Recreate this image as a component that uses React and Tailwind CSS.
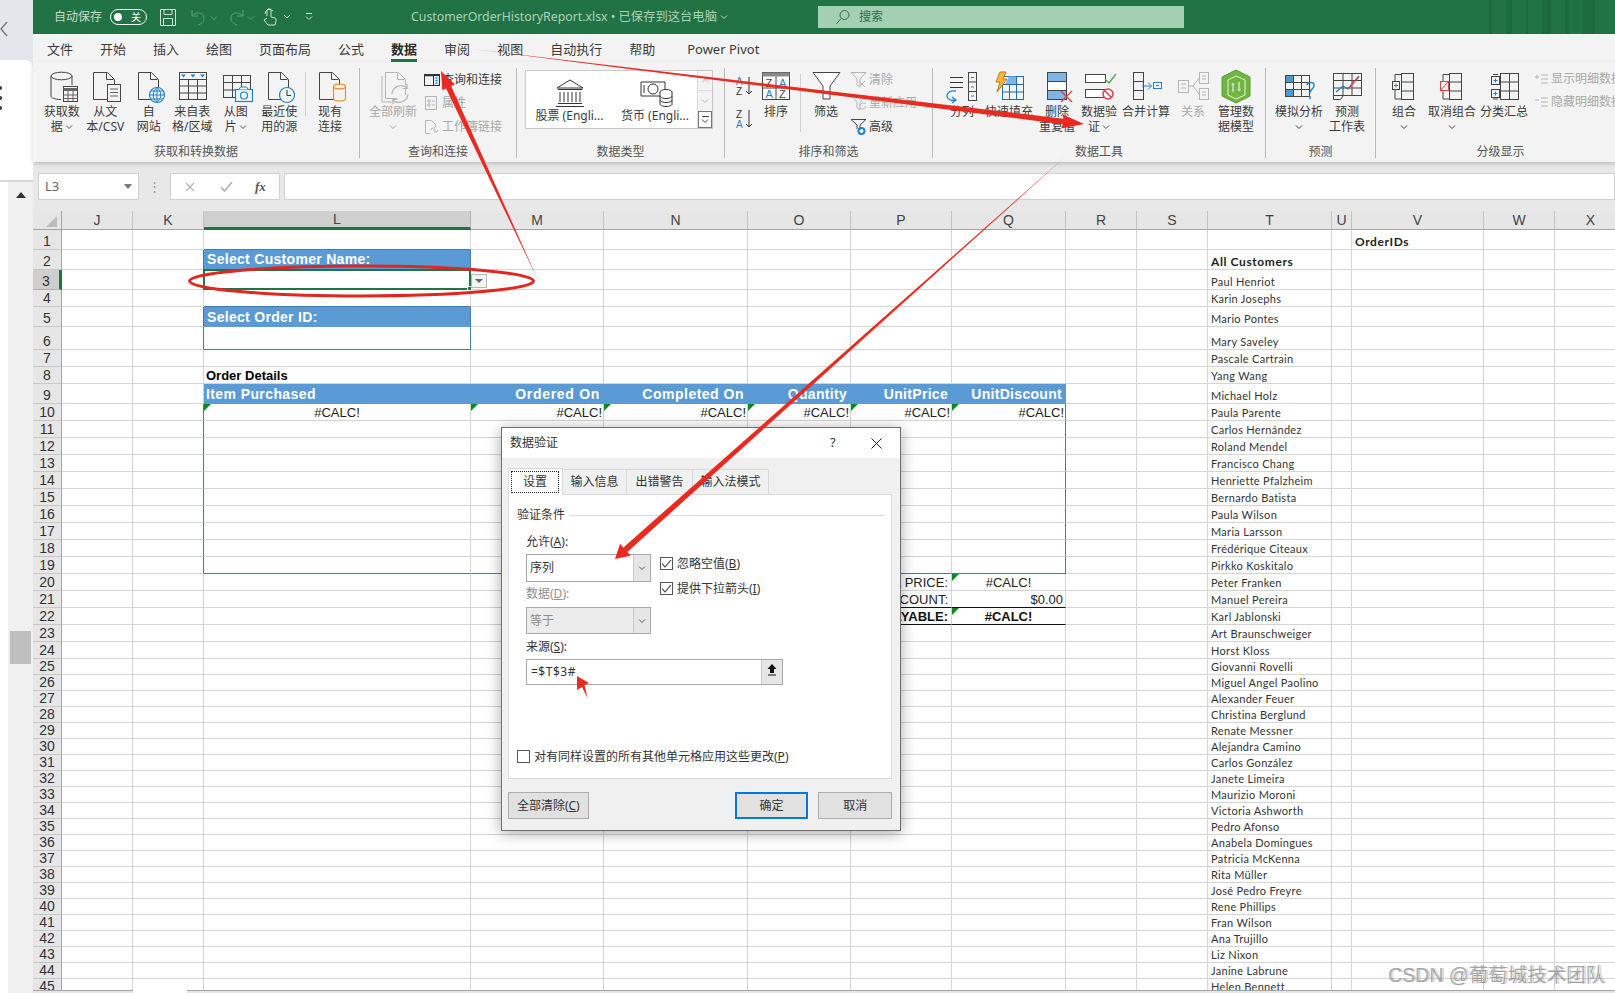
import { Fragment } from "react";

const UI_FONT = "font-['Noto_Sans','Noto_Sans_CJK_SC',sans-serif]";

const TABS = ["文件", "开始", "插入", "绘图", "页面布局", "公式", "数据", "审阅", "视图", "自动执行", "帮助", "Power Pivot"];

const COLS = ["J", "K", "L", "M", "N", "O", "P", "Q", "R", "S", "T", "U", "V", "W", "X"];

const CUSTOMERS = [
  "Paul Henriot", "Karin Josephs", "Mario Pontes", "Mary Saveley", "Pascale Cartrain", "Yang Wang", "Michael Holz",
  "Paula Parente", "Carlos Hernández", "Roland Mendel", "Francisco Chang", "Henriette Pfalzheim", "Bernardo Batista",
  "Paula Wilson", "Maria Larsson", "Frédérique Citeaux", "Pirkko Koskitalo", "Peter Franken", "Manuel Pereira",
  "Karl Jablonski", "Art Braunschweiger", "Horst Kloss", "Giovanni Rovelli", "Miguel Angel Paolino", "Alexander Feuer",
  "Christina Berglund", "Renate Messner", "Alejandra Camino", "Carlos González", "Janete Limeira", "Maurizio Moroni",
  "Victoria Ashworth", "Pedro Afonso", "Anabela Domingues", "Patricia McKenna", "Rita Müller", "José Pedro Freyre",
  "Rene Phillips", "Fran Wilson", "Ana Trujillo", "Liz Nixon", "Janine Labrune", "Helen Bennett",
];

const BLUE = "bg-[#5b9bd5] border-r-[#5b9bd5] border-b-[#5b9bd5] text-white font-bold text-[14px] pb-[1px]";
const CALC = "justify-end pr-[1px] text-[13px] text-[#222]";
const LIST_HEAD = "pl-[3px] font-['Lato',sans-serif] font-bold text-[12px] tracking-[0.6px] text-[#222]";

// cell styles, keyed by column + row
const CELLS = {
  L1: { cls: "border-b-[#3f7cb3]" },
  K2: { cls: "border-r-[#3f7cb3]" },
  L2: { text: "Select Customer Name:", cls: "bg-[#5b9bd5] border-r-[#3f7cb3] border-b-[#5b9bd5] text-white font-bold text-[14px] tracking-[0.3px] pl-[3px] pb-[2px]" },
  L4: { cls: "border-b-[#3f7cb3]" },
  K5: { cls: "border-r-[#3f7cb3]" },
  L5: { text: "Select Order ID:", cls: "bg-[#5b9bd5] border-r-[#3f7cb3] border-b-[#5b9bd5] text-white font-bold text-[14px] tracking-[0.3px] pl-[3px] pb-[1px]" },
  K6: { cls: "border-r-[#3f7cb3]" },
  L6: { cls: "border-r-[#3f7cb3] border-b-[#3f7cb3]" },
  L8: { text: "Order Details", cls: "pl-[2px] font-bold text-[13px] text-black" },
  L9: { text: "Item Purchased", cls: `${BLUE} pl-[2px] tracking-[0.4px]` },
  M9: { text: "Ordered On", cls: `${BLUE} justify-end pr-[3px] tracking-[0.7px]` },
  N9: { text: "Completed On", cls: `${BLUE} justify-end pr-[3px] tracking-[0.5px]` },
  O9: { text: "Quantity", cls: `${BLUE} justify-end pr-[3px] tracking-[0.3px]` },
  P9: { text: "UnitPrice", cls: `${BLUE} justify-end pr-[3px] tracking-[0.3px]` },
  Q9: { text: "UnitDiscount", cls: `${BLUE} justify-end pr-[3px] tracking-[0.3px]` },
  L10: { text: "#CALC!", tri: true, cls: "justify-center text-[13px] text-[#222]" },
  M10: { text: "#CALC!", tri: true, cls: CALC },
  N10: { text: "#CALC!", tri: true, cls: CALC },
  O10: { text: "#CALC!", tri: true, cls: CALC },
  P10: { text: "#CALC!", tri: true, cls: CALC },
  Q10: { text: "#CALC!", tri: true, cls: `${CALC} border-r-[#3f7cb3]` },
  L19: { cls: "border-b-[#3f7cb3]" },
  M19: { cls: "border-b-[#3f7cb3]" },
  N19: { cls: "border-b-[#3f7cb3]" },
  O19: { cls: "border-b-[#3f7cb3]" },
  P19: { cls: "border-b-[#3f7cb3]" },
  Q19: { cls: "border-b-[#3f7cb3] border-r-[#3f7cb3]" },
  P20: { text: "TOTAL PRICE:", cls: "justify-end pr-[3px] text-[13px] text-[#222]" },
  Q20: { text: "#CALC!", tri: true, cls: "justify-center text-[13px] text-[#222]" },
  P21: { text: "DISCOUNT:", cls: "justify-end pr-[3px] text-[13px] text-[#222] border-b-[#111]" },
  Q21: { text: "$0.00", cls: "justify-end pr-[2px] text-[13px] text-[#222] border-b-[#111]" },
  P22: { text: "TOTAL PAYABLE:", cls: "justify-end pr-[3px] font-bold text-[13px] text-[#111] border-b-[#111]" },
  Q22: { text: "#CALC!", tri: true, cls: "justify-center font-bold text-[13px] text-[#111] border-b-[#111]" },
  V1: { text: "OrderIDs", cls: LIST_HEAD },
  T2: { text: "All Customers", cls: LIST_HEAD },
};
for (let r = 10; r < 19; r++) {
  CELLS["K" + r] = { cls: "border-r-[#3f7cb3]" };
  if (r > 10) CELLS["Q" + r] = { cls: "border-r-[#3f7cb3]" };
}
CELLS.K19 = { cls: "border-r-[#3f7cb3]" };
CUSTOMERS.forEach((name, i) => {
  CELLS["T" + (i + 3)] = { text: name, cls: "pl-[3px] font-['Lato',sans-serif] text-[11px] tracking-[0.3px] text-[#333]" };
});

function Chevron({ className = "" }) {
  return (
    <svg width="8" height="6" viewBox="0 0 8 6" className={className}>
      <path d="M1 1.5l3 3 3-3" fill="none" stroke="currentColor" strokeWidth="1" />
    </svg>
  );
}

function Ic({ children, w = 36, h = 36 }) {
  return (
    <svg width={w} height={h} viewBox={`0 0 ${w} ${h}`} fill="none" stroke="#444" strokeWidth="1" className="shrink-0">
      {children}
    </svg>
  );
}

const DOC = (x, y, w, h) => `M${x + 0.5} ${y + 0.5}h${w - 7}l7 7v${h - 7}h${-w}z M${x + w - 7.5} ${y + 0.5}v7h7`;

const ICONS = {
  getData: (
    <Ic>
      <path d="M7 8v20c0 2 4 3.500 10 3.500 M28 8v9" />
      <ellipse cx="17.500" cy="8" rx="10.500" ry="3.800" fill="#f3f3f3" />
      <rect x="19.500" y="18.500" width="14" height="15" fill="#f3f3f3" />
      <path d="M19.500 21.500h14" stroke="#666" strokeWidth="3" />
      <path d="M19.500 27h14M19.500 30.500h14M24 23v10M29 23v10" stroke="#666" />
    </Ic>
  ),
  fromText: (
    <Ic>
      <path d={DOC(6, 4, 21, 27)} />
      <rect x="20.500" y="16.500" width="13" height="17" fill="#f3f3f3" />
      <path d="M23 21h8M23 24.500h8M23 28h8" stroke="#666" />
    </Ic>
  ),
  web: (
    <Ic>
      <path d={DOC(7, 4, 20, 27)} />
      <circle cx="26" cy="27" r="7.500" fill="#f3f3f3" stroke="#1e84c9" strokeWidth="1.200" />
      <path d="M18.500 27h15M26 19.500v15M20 23h12M20 31h12M26 19.500c-5 4-5 11 0 15M26 19.500c5 4 5 11 0 15" stroke="#1e84c9" />
    </Ic>
  ),
  fromTable: (
    <Ic>
      <rect x="5.500" y="4.500" width="27" height="27" />
      <path d="M5.500 11.500h27M5.500 18h27M5.500 25h27M14.500 11.500v20M23.500 11.500v20" />
      <path d="M7 6.500h5l-2.500 3zM16.500 6.500h5l-2.500 3zM26 6.500h5l-2.500 3z" fill="#1e84c9" stroke="none" />
    </Ic>
  ),
  fromPic: (
    <Ic>
      <rect x="5.500" y="7.500" width="27" height="22" />
      <path d="M5.500 14.500h27M5.500 22h27M14.500 7.500v22M23.500 7.500v22" />
      <rect x="17.500" y="21.500" width="17" height="12" fill="#f3f3f3" stroke="#1e84c9" strokeWidth="1.200" />
      <path d="M21 21.500l1.500-2.500h6l1.500 2.500" fill="#f3f3f3" stroke="#1e84c9" />
      <circle cx="26" cy="27.500" r="3.500" stroke="#1e84c9" strokeWidth="1.200" />
    </Ic>
  ),
  recent: (
    <Ic>
      <path d={DOC(7, 4, 20, 27)} />
      <circle cx="26" cy="27" r="7.500" fill="#f3f3f3" stroke="#1e84c9" strokeWidth="1.200" />
      <path d="M26 22v5.500h4" stroke="#333" />
    </Ic>
  ),
  existing: (
    <Ic>
      <path d={DOC(7, 4, 20, 27)} />
      <path d="M21.500 18.500v12c0 1.500 2.500 2.500 6 2.500s6-1 6-2.500v-12" fill="#f3f3f3" stroke="#e8912d" strokeWidth="1.200" />
      <ellipse cx="27.500" cy="18.500" rx="6" ry="2.300" fill="#f3f3f3" stroke="#e8912d" strokeWidth="1.200" />
    </Ic>
  ),
  refresh: (
    <Ic>
      <g stroke="#b5b5b5">
        <path d={DOC(10, 4, 20, 26)} />
        <path d="M7 8v26h16" />
        <path d="M17 26a9 9 0 0 1 15-6M33 26a9 9 0 0 1-15 6M32 16v4.500h-4.500M18 36v-4.500h4.500" fill="#f3f3f3" strokeWidth="1.200" />
      </g>
    </Ic>
  ),
  bank: (
    <Ic h={30} w={36}>
      <path d="M18 2L5 10h26z M6 11.500h24M8 14v10M12 14v10M16 14v10M20 14v10M24 14v10M28 14v10M6 25.500h24M4 28.500h28" stroke="#333" />
    </Ic>
  ),
  currency: (
    <Ic h={30} w={40}>
      <path d="M28 18H6V4h24v8" stroke="#333" />
      <circle cx="18" cy="11" r="5" stroke="#333" />
      <path d="M9 7v8" stroke="#333" />
      <g stroke="#333" fill="#fff">
        <ellipse cx="31" cy="14" rx="6" ry="2.500" />
        <path d="M25 14v12c0 1.500 3 2.500 6 2.500s6-1 6-2.500V14M25 18c0 1.500 3 2.500 6 2.500s6-1 6-2.500M25 22c0 1.500 3 2.500 6 2.500s6-1 6-2.500" />
      </g>
    </Ic>
  ),
  sortBig: (
    <Ic w={36} h={36}>
      <rect x="4.500" y="4.500" width="27" height="27" fill="#fff" />
      <rect x="4.500" y="4.500" width="27" height="4" fill="#8a8a8a" stroke="none" />
      <path d="M18 8.500v23M4.500 20h27" />
      <g stroke="none" fontFamily="Liberation Sans" fontSize="11">
        <text x="7.500" y="18.500" fill="#444">Z</text>
        <text x="21" y="18.500" fill="#1e84c9">A</text>
        <text x="7.500" y="30" fill="#1e84c9">A</text>
        <text x="21" y="30" fill="#444">Z</text>
      </g>
    </Ic>
  ),
  funnel: (
    <Ic>
      <path d="M5 4.500h27L22 18v13h-7V18z" fill="#fff" />
    </Ic>
  ),
  split: (
    <Ic>
      <path d="M6 9.500h13M6 14.500h13M6 19.500h13" stroke="#333" />
      <path d="M12 23c-6-1-9 2-9 5s3 5 9 4" stroke="#1e84c9" strokeWidth="1.300" />
      <path d="M8 29l4 3-4 3" stroke="#1e84c9" strokeWidth="1.300" />
      <rect x="24.500" y="4.500" width="8" height="28" />
      <path d="M24.500 14h8M24.500 23.500h8" />
      <path d="M27 9.500h3M27 19h3M27 28h3" stroke="#1e84c9" />
    </Ic>
  ),
  flash: (
    <Ic>
      <rect x="11.500" y="8.500" width="21" height="23" stroke="#1e6fa8" />
      <path d="M18 8.500h7v8h-11z" fill="#7cb5e6" stroke="none" />
      <path d="M11.500 16.500h21M11.500 24h21M18.500 16.500v15M25.500 8.500v23" stroke="#1e6fa8" />
      <path d="M9 4h6l-3 7h4L6 24l3-10H5z" fill="#f5b83d" stroke="#c9781a" />
    </Ic>
  ),
  dup: (
    <Ic>
      <rect x="8.500" y="4.500" width="19" height="27" fill="#fff" />
      <rect x="8.500" y="4.500" width="19" height="9" fill="#7cb5e6" />
      <rect x="8.500" y="22.500" width="19" height="9" fill="#7cb5e6" />
      <path d="M22 23l11 11M33 23L22 34" stroke="#e0413a" strokeWidth="1.300" />
    </Ic>
  ),
  validate: (
    <Ic>
      <rect x="4.500" y="6.500" width="20" height="8" fill="#fff" />
      <rect x="4.500" y="21.500" width="20" height="8" fill="#fff" />
      <path d="M24 11l4 4 7-9" stroke="#4ca64c" strokeWidth="1.300" />
      <circle cx="27" cy="26" r="5" fill="#f3f3f3" stroke="#d9434e" strokeWidth="1.500" />
      <path d="M23.500 22.500l7 7" stroke="#d9434e" strokeWidth="1.500" />
    </Ic>
  ),
  consolidate: (
    <Ic>
      <rect x="5.500" y="4.500" width="10" height="9" />
      <rect x="5.500" y="13.500" width="10" height="9" />
      <rect x="5.500" y="22.500" width="10" height="9" />
      <path d="M14 18h9M20 14.500l3.500 3.500-3.500 3.500" stroke="#1e84c9" />
      <rect x="25.500" y="14.500" width="8" height="6" stroke="#1e84c9" />
      <path d="M28 17.500h3" stroke="#1e84c9" />
    </Ic>
  ),
  relation: (
    <Ic>
      <g stroke="#b5b5b5">
        <rect x="3.500" y="12.500" width="10" height="12" />
        <rect x="24.500" y="4.500" width="9" height="11" />
        <rect x="24.500" y="20.500" width="9" height="11" />
        <path d="M13 18h5l6-8M18 18l6 8M6 16h5M6 20h5M27 8h4M27 11h4M27 24h4M27 27h4" />
      </g>
    </Ic>
  ),
  model: (
    <Ic>
      <path d="M18 2l14 7v19l-14 7-14-7V9z" fill="#6fb540" stroke="#5a9c33" />
      <path d="M10 12l8-4 9 4v15l-9 4-8-4z" fill="none" stroke="#e8f3dd" />
      <path d="M15 24v-9M15 15l-2 2M15 15l2 2M21 14v9M21 23l-2-2M21 23l2-2" stroke="#fff" />
    </Ic>
  ),
  whatif: (
    <Ic>
      <rect x="4.500" y="7.500" width="24" height="21" />
      <rect x="4.500" y="7.500" width="8" height="7" fill="#4a9ad9" />
      <rect x="4.500" y="21.500" width="8" height="7" fill="#4a9ad9" />
      <path d="M4.500 14.500h24M4.500 21.500h24M12.500 7.500v21M20.500 7.500v21" />
      <path d="M26 17c1-4 8-3 7 1-.5 3-4 3-4 7M29 28v3" fill="none" stroke="#1e84c9" strokeWidth="1.500" />
    </Ic>
  ),
  forecast: (
    <Ic>
      <rect x="4.500" y="5.500" width="28" height="22" />
      <path d="M4.500 12.500h28M4.500 20h28M14 5.500v22M23 5.500v22" />
      <path d="M7 24l7-6 5 3 11-13" stroke="#1e84c9" strokeWidth="1.300" />
      <path d="M19 21l5-6 6-6" stroke="#e0413a" strokeWidth="1.300" />
      <path d="M4.500 27.500v4h7l3-4" />
    </Ic>
  ),
  group: (
    <Ic>
      <path d="M15 6.500h-6V31h6" />
      <rect x="15.500" y="5.500" width="12" height="26" />
      <path d="M15.500 14h12M15.500 23h12" />
      <rect x="6.500" y="13.500" width="7" height="8" fill="#f3f3f3" />
      <path d="M8 17.500h4M10 15.500v4" stroke="#1e84c9" />
    </Ic>
  ),
  ungroup: (
    <Ic>
      <path d="M15 6.500h-6V31h6" />
      <rect x="15.500" y="5.500" width="12" height="26" />
      <path d="M15.500 14h12M15.500 23h12" />
      <rect x="6.500" y="13.500" width="8" height="9" fill="#f3f3f3" stroke="#d9434e" />
      <path d="M7 22l7-8" stroke="#d9434e" />
    </Ic>
  ),
  subtotal: (
    <Ic>
      <path d="M12 6.500h-5M12 31h-5" />
      <rect x="14.500" y="5.500" width="18" height="26" />
      <path d="M14.500 14h18M14.500 23h18M23.500 5.500v26" />
      <rect x="5.500" y="8.500" width="8" height="8" fill="#f3f3f3" />
      <rect x="5.500" y="21.500" width="8" height="8" fill="#f3f3f3" />
      <path d="M7.500 12.500h4M9.500 10.500v4M7.500 25.500h4M9.500 23.500v4" stroke="#1e84c9" />
    </Ic>
  ),
};

// 16px icons for the small ribbon rows
const SMALL = {
  query: (
    <Ic w={18} h={16}>
      <rect x="1.500" y="2.500" width="15" height="11" stroke="#333" />
      <path d="M1.500 3.500h15" stroke="#333" strokeWidth="1.500" />
      <rect x="10.500" y="3.500" width="6" height="10" fill="#cfe3f3" stroke="#333" />
      <path d="M12.500 6h2M12.500 8.500h2M12.500 11h2" stroke="#1e84c9" />
    </Ic>
  ),
  props: (
    <Ic w={18} h={16}>
      <g stroke="#b5b5b5">
        <rect x="2.500" y="1.500" width="11" height="13" />
        <path d="M5 5h2v2H5zM5 9h2v2H5zM9 6h3M9 10h3" />
      </g>
    </Ic>
  ),
  links: (
    <Ic w={18} h={16}>
      <g stroke="#b5b5b5">
        <path d="M2.500 1.500h6l4 4v3M2.500 1.500v13h5" />
        <path d="M8 11a2 2 0 0 1 2-2h2M15 11a2 2 0 0 1-2 2h-2M10 11h3" />
      </g>
    </Ic>
  ),
  clear: (
    <Ic w={18} h={18}>
      <g stroke="#b5b5b5">
        <path d="M1 1.500h15L10 8v8l-3-2V8z" />
        <path d="M9 10l6 6M15 10l-6 6" />
      </g>
    </Ic>
  ),
  reapply: (
    <Ic w={18} h={18}>
      <g stroke="#b5b5b5">
        <path d="M1 1.500h15L10 8v8l-3-2V8z" />
        <path d="M10 12a3.500 3.500 0 0 1 6-2M16 12a3.500 3.500 0 0 1-6 2" />
      </g>
    </Ic>
  ),
  advanced: (
    <Ic w={18} h={18}>
      <path d="M1 1.500h15L10 7v5" stroke="#444" />
      <path d="M1 1.500L7 7v4" stroke="#444" />
      <circle cx="11.500" cy="13" r="3" stroke="#1e84c9" strokeWidth="2" />
    </Ic>
  ),
  show: (
    <Ic w={16} h={14}>
      <path d="M1 5h4M3 3v4M7 3h7M7 7h7M7 11h7" stroke="#b5b5b5" />
    </Ic>
  ),
  hide: (
    <Ic w={16} h={14}>
      <path d="M1 5h4M7 3h7M7 7h7M7 11h7" stroke="#b5b5b5" />
    </Ic>
  ),
};

function Btn({ icon, lines, w, chevron, disabled }) {
  return (
    <div className={`flex flex-col items-center shrink-0 ${w} ${disabled ? "text-[#a9a9a9]" : "text-[#3b3b3b]"}`}>
      {icon}
      <div className="flex flex-col items-center text-[12px] leading-[15px] whitespace-nowrap">
        {lines.map((l, i) => (
          <span key={i} className="flex items-center gap-[2px]">
            {l}
            {chevron && i === lines.length - 1 && <Chevron className="text-[#555]" />}
          </span>
        ))}
      </div>
    </div>
  );
}

function SmallRow({ icon, label, disabled, h = "h-[23.5px]" }) {
  return (
    <div className={`flex items-center gap-[1px] whitespace-nowrap text-[12px] ${h} ${disabled ? "text-[#a9a9a9]" : "text-[#3b3b3b]"}`}>
      {icon}
      {label}
    </div>
  );
}

function Group({ w, label, children, last, labelCls = "" }) {
  return (
    <div className={`flex flex-col h-[90px] shrink-0 ${w} ${last ? "" : "border-r border-[#b9b9b9]"}`}>
      <div className="flex flex-1 min-h-0">{children}</div>
      <div className={`h-[12px] leading-[12px] text-center text-[12px] text-[#555] ${labelCls}`}>{label}</div>
    </div>
  );
}

function Ribbon() {
  return (
    <div className={`h-[100px] pt-[6px] bg-[#f3f3f3] flex overflow-hidden relative z-10 shadow-[0_2px_4px_rgba(0,0,0,0.18)] ${UI_FONT}`}>
      <Group w="w-[327px]" label="获取和转换数据">
        <div className="flex pl-[7px]">
          <Btn w="w-[43.5px]" icon={ICONS.getData} lines={["获取数", "据"]} chevron />
          <Btn w="w-[43.5px]" icon={ICONS.fromText} lines={["从文", "本/CSV"]} />
          <Btn w="w-[43.5px]" icon={ICONS.web} lines={["自", "网站"]} />
          <Btn w="w-[43.5px]" icon={ICONS.fromTable} lines={["来自表", "格/区域"]} />
          <Btn w="w-[43.5px]" icon={ICONS.fromPic} lines={["从图", "片"]} chevron />
          <Btn w="w-[43.5px]" icon={ICONS.recent} lines={["最近使", "用的源"]} />
          <div className="w-px h-[44px] mt-[4px] ml-[4px] bg-[#d0d0d0]" />
          <Btn w="w-[48px]" icon={ICONS.existing} lines={["现有", "连接"]} />
        </div>
      </Group>
      <Group w="w-[157px]" label="查询和连接">
        <div className="flex pl-[9px]">
          <div className="flex flex-col items-center w-[48px] text-[12px] leading-[15px] text-[#a9a9a9] whitespace-nowrap">
            {ICONS.refresh}
            全部刷新
            <Chevron className="mt-[5px] text-[#a9a9a9]" />
          </div>
          <div className="flex flex-col ml-[6px]">
            <SmallRow icon={SMALL.query} label="查询和连接" />
            <SmallRow icon={SMALL.props} label="属性" disabled />
            <SmallRow icon={SMALL.links} label="工作簿链接" disabled />
          </div>
        </div>
      </Group>
      <Group w="w-[208px]" label="数据类型">
        <div className="flex ml-[8px] mt-[2px] w-[188px] h-[59px] bg-white border border-[#c8c8c8] text-[12px] text-[#3b3b3b]">
          <div className="flex flex-col items-center w-[87px] pt-[7px] whitespace-nowrap">
            {ICONS.bank}
            <span className="leading-[15px]">股票 (Engli...</span>
          </div>
          <div className="flex flex-col items-center w-[84px] pt-[7px] whitespace-nowrap">
            {ICONS.currency}
            <span className="leading-[15px]">货币 (Engli...</span>
          </div>
          <div className="flex flex-col w-[15px] border-l border-[#dcdcdc]">
            <div className="h-[20px] flex items-center justify-center text-[#bbb] bg-[#f3f3f3] border-b border-[#dcdcdc]"><Chevron className="rotate-180" /></div>
            <div className="h-[20px] flex items-center justify-center text-[#bbb] bg-[#f3f3f3]"><Chevron /></div>
            <div className="flex-1 flex flex-col items-center justify-center border border-[#777] text-[#444] bg-white">
              <div className="w-[7px] h-px bg-[#444] mb-px" />
              <Chevron />
            </div>
          </div>
        </div>
      </Group>
      <Group w="w-[208px]" label="排序和筛选">
        <div className="flex pl-[8px]">
          <div className="flex flex-col w-[22px] pt-[7px] font-['Liberation_Sans',sans-serif]">
            <svg width="22" height="22" viewBox="0 0 22 22" fontSize="10" fontFamily="Liberation Sans">
              <text x="3" y="10" fill="#1e84c9">A</text>
              <text x="3" y="20" fill="#333">Z</text>
              <path d="M16 2v17M13 16l3 3 3-3" fill="none" stroke="#333" />
            </svg>
            <svg className="mt-[11px]" width="22" height="22" viewBox="0 0 22 22" fontSize="10" fontFamily="Liberation Sans">
              <text x="3" y="10" fill="#333">Z</text>
              <text x="3" y="20" fill="#1e84c9">A</text>
              <path d="M16 2v17M13 16l3 3 3-3" fill="none" stroke="#333" />
            </svg>
          </div>
          <Btn w="w-[38px] ml-[2px]" icon={ICONS.sortBig} lines={["排序"]} />
          <div className="w-px h-[58px] mt-[6px] ml-[5px] bg-[#d0d0d0]" />
          <Btn w="w-[36px] ml-[7px]" icon={ICONS.funnel} lines={["筛选"]} />
          <div className="flex flex-col ml-[6px]">
            <SmallRow icon={SMALL.clear} label="清除" disabled />
            <SmallRow icon={SMALL.reapply} label="重新应用" disabled />
            <SmallRow icon={SMALL.advanced} label="高级" />
          </div>
        </div>
      </Group>
      <Group w="w-[333px]" label="数据工具">
        <div className="flex pl-[5px]">
          <Btn w="w-[48px]" icon={ICONS.split} lines={["分列"]} />
          <Btn w="w-[46px]" icon={ICONS.flash} lines={["快速填充"]} />
          <Btn w="w-[50px]" icon={ICONS.dup} lines={["删除", "重复值"]} />
          <Btn w="w-[34px]" icon={ICONS.validate} lines={["数据验", "证"]} chevron />
          <Btn w="w-[60px]" icon={ICONS.consolidate} lines={["合并计算"]} />
          <Btn w="w-[34px]" icon={ICONS.relation} lines={["关系"]} disabled />
          <Btn w="w-[52px]" icon={ICONS.model} lines={["管理数", "据模型"]} />
        </div>
      </Group>
      <Group w="w-[110px]" label="预测">
        <div className="flex pl-[7px]">
          <div className="flex flex-col items-center w-[52px] text-[12px] leading-[15px] text-[#3b3b3b] whitespace-nowrap">
            {ICONS.whatif}
            模拟分析
            <Chevron className="mt-[5px]" />
          </div>
          <Btn w="w-[44px]" icon={ICONS.forecast} lines={["预测", "工作表"]} />
        </div>
      </Group>
      <Group w="w-[239px]" label="分级显示" last labelCls="pl-[10px]">
        <div className="flex pl-[4px]">
          <div className="flex flex-col items-center w-[48px] text-[12px] leading-[15px] text-[#3b3b3b] whitespace-nowrap">
            {ICONS.group}
            组合
            <Chevron className="mt-[5px]" />
          </div>
          <div className="flex flex-col items-center w-[48px] text-[12px] leading-[15px] text-[#3b3b3b] whitespace-nowrap">
            {ICONS.ungroup}
            取消组合
            <Chevron className="mt-[5px]" />
          </div>
          <Btn w="w-[56px]" icon={ICONS.subtotal} lines={["分类汇总"]} />
          <div className="flex flex-col ml-[2px]">
            <SmallRow icon={SMALL.show} label="显示明细数据" disabled h="h-[22.5px]" />
            <SmallRow icon={SMALL.hide} label="隐藏明细数据" disabled h="h-[22.5px]" />
          </div>
        </div>
      </Group>
    </div>
  );
}

function TitleBar() {
  return (
    <div className={`relative h-[34px] bg-[#217346] flex items-center overflow-hidden text-[#c4dccd] text-[12px] ${UI_FONT}`}>
      <span className="ml-[21px]">自动保存</span>
      <div className="ml-[8px] w-[37px] h-[16px] rounded-full border-[1.5px] border-white flex items-center justify-between px-[3px] text-[10px] leading-none text-white">
        <span className="w-[8px] h-[8px] rounded-full bg-white" />
        <span className="mr-[2px]">关</span>
      </div>
      <svg className="ml-[13px]" width="16" height="17" viewBox="0 0 16 17" fill="none" stroke="#cfe3d6">
        <path d="M.5.5h15v16H.5zM4 .5v5h8v-5M3.500 16.500v-7h9v7" />
      </svg>
      <svg className="ml-[14px]" width="34" height="17" viewBox="0 0 34 17" fill="none" stroke="#5f9c7b">
        <path d="M2 1v6h6M2 7c4-5 12-4 12 2 0 4-3 6-6 7" />
        <path d="M21 7.500l3 3 3-3" />
      </svg>
      <svg className="ml-[5px]" width="30" height="17" viewBox="0 0 30 17" fill="none" stroke="#5f9c7b">
        <path d="M14 1v6H8M14 7C10 2 2 3 2 9c0 4 3 6 6 7" />
        <path d="M19 7.500l3 3 3-3" />
      </svg>
      <svg className="ml-[3px]" width="32" height="18" viewBox="0 0 32 18" fill="none" stroke="#cfe3d6">
        <path d="M5 8V3c0-3 4-3 4 0v6l4 1c1 0 1 2 1 3l-1 4H6l-4-5 3-2M3 6a4.500 4.500 0 0 1 8-3" />
        <path d="M22 7l3 3 3-3" />
      </svg>
      <svg className="ml-[10px]" width="10" height="10" viewBox="0 0 10 10" fill="none" stroke="#cfe3d6">
        <path d="M2 1.500h6M2 4.500l3 3 3-3" />
      </svg>
      <span className="ml-[97px] text-[12.3px] text-[#aed0bb] whitespace-nowrap">CustomerOrderHistoryReport.xlsx • 已保存到这台电脑</span>
      <Chevron className="ml-[3px]" />
      <div className="absolute left-[785px] top-[6px] w-[366px] h-[22px] bg-[#a3cfb2] flex items-center text-[#2f6e4c]">
        <svg className="ml-[17px]" width="16" height="16" viewBox="0 0 16 16" fill="none" stroke="#2f6e4c">
          <circle cx="9.500" cy="6" r="4.500" />
          <path d="M6 9.500L1.500 15" />
        </svg>
        <span className="ml-[8px]">搜索</span>
      </div>
      <div className="absolute right-0 top-0 h-full flex gap-[14px] pr-[20px]">
        <div className="w-[3px] h-full bg-[#1d6a40]" />
        <div className="w-[6px] h-full bg-[#1d6a40]" />
        <div className="w-[2px] h-full bg-[#1d6a40]" />
        <div className="w-[9px] h-full bg-[#1d6a40]" />
        <div className="w-[4px] h-full bg-[#1d6a40]" />
        <div className="w-[12px] h-full bg-[#1d6a40]" />
      </div>
    </div>
  );
}

function FormulaBar() {
  return (
    <div className={`h-[49px] pt-[11px] bg-[#e8e8e8] flex items-start ${UI_FONT}`}>
      <div className="ml-[5px] w-[101px] h-[27px] bg-white border border-[#d0d0d0] flex items-center justify-between px-[6px] text-[13px] text-[#666]">
        L3
        <span className="w-0 h-0 border-x-[4px] border-x-transparent border-t-[5px] border-t-[#777]" />
      </div>
      <div className="w-[31px] h-[27px] flex items-center justify-center text-[#999] text-[13px] leading-none">⋮</div>
      <div className="w-[110px] h-[27px] bg-white border border-[#d0d0d0] flex items-center text-[#b5b5b5]">
        <svg className="ml-[14px]" width="10" height="10" viewBox="0 0 10 10" stroke="currentColor" strokeWidth="1.300"><path d="M1 1l8 8M9 1L1 9" /></svg>
        <svg className="ml-[25px]" width="13" height="11" viewBox="0 0 13 11" fill="none" stroke="currentColor" strokeWidth="1.800"><path d="M1 6l3.500 4L12 1" /></svg>
        <span className="ml-[22px] font-['Liberation_Serif',serif] italic font-bold text-[13px] text-[#555]">fx</span>
      </div>
      <div className="ml-[4px] flex-1 h-[27px] bg-white border border-[#d0d0d0]" />
    </div>
  );
}

function Cell({ col, row }) {
  const cell = CELLS[col + row] || {};
  return (
    <div className={`relative flex items-end leading-[15px] whitespace-nowrap border-r border-b border-[#d4d4d4] min-w-0 ${cell.cls || ""}`}>
      {cell.tri && <span className="absolute left-0 top-0 w-[7px] h-[7px] bg-[#0b8a1d] [clip-path:polygon(0_0,100%_0,0_100%)]" />}
      {cell.text}
      {col === "L" && row === 3 && (
        <>
          <div className="absolute -left-px -top-px -right-px -bottom-px border-2 border-[#217346]">
            <span className="absolute -right-[3px] -bottom-[3px] w-[5px] h-[5px] bg-[#217346] border border-white" />
          </div>
          <div className="absolute -right-[17px] top-[4px] w-[16px] h-[14px] bg-[#f3f3f3] border border-[#b8b8b8] flex items-center justify-center z-10">
            <span className="w-0 h-0 border-x-[4px] border-x-transparent border-t-[4px] border-t-[#666]" />
          </div>
        </>
      )}
    </div>
  );
}

function Sheet() {
  const rows = Array.from({ length: 45 }, (_, i) => i + 1);
  return (
    <div className="flex-1 min-h-0 overflow-hidden bg-white font-['Liberation_Sans',sans-serif] grid grid-cols-[29px_71px_71px_267px_133px_144px_103px_101px_114px_71px_71px_124px_20px_132px_71px_72px] grid-rows-[19px_20px_20px_20px_17px_20px_23px_17px_17px_20px_repeat(15,17px)_repeat(21,16px)]">
      <div className="bg-[#e6e6e6] border-r border-b border-[#a5a5a5] flex items-end justify-end pr-[4px] pb-[2px]">
        <span className="w-0 h-0 border-l-[11px] border-l-transparent border-b-[11px] border-b-[#bdbdbd]" />
      </div>
      {COLS.map((c) => (
        <div
          key={c}
          className={`flex items-center justify-center text-[14px] text-[#444] border-r ${
            c === "L" ? "bg-[#cfcfcf] border-b-[3px] border-b-[#217346] border-r-[#b0b0b0]" : "bg-[#e6e6e6] border-b border-b-[#a5a5a5] border-r-[#c2c2c2]"
          }`}
        >
          {c}
        </div>
      ))}
      {rows.map((r) => (
        <Fragment key={r}>
          <div
            className={`flex items-end justify-center leading-[15px] text-[14px] text-[#333] border-b ${
              r === 3
                ? "bg-[#cfcfcf] border-r-[3px] border-r-[#217346] border-b-[#b0b0b0]"
                : "bg-[#e6e6e6] border-r border-r-[#a5a5a5] border-b-[#c8c8c8]"
            }`}
          >
            {r}
          </div>
          {COLS.map((c) => (
            <Cell key={c} col={c} row={r} />
          ))}
        </Fragment>
      ))}
    </div>
  );
}

function Check({ checked }) {
  return (
    <span className="w-[13px] h-[13px] bg-white border border-[#555] flex items-center justify-center shrink-0">
      {checked && (
        <svg width="11" height="9" viewBox="0 0 11 9" fill="none" stroke="#333" strokeWidth="1.100">
          <path d="M1 4.500L4 8l6-7" />
        </svg>
      )}
    </span>
  );
}

function Drop({ value, disabled, h }) {
  return (
    <div className={`flex w-[125px] border border-[#a8a8a8] ${h} ${disabled ? "bg-[#ececec] text-[#8d8d8d]" : "bg-white text-[#333]"}`}>
      <span className="flex-1 flex items-center pl-[3px]">{value}</span>
      <span className="w-[17px] bg-[#e6e6e6] border-l border-[#c8c8c8] flex items-center justify-center text-[#555]">
        <Chevron />
      </span>
    </div>
  );
}

function DialogTab({ children, w }) {
  return (
    <div className={`h-[25px] mt-[1px] flex items-center justify-center bg-[#f0f0f0] border border-l-0 border-b-0 border-[#d9d9d9] ${w}`}>
      {children}
    </div>
  );
}

function DialogBtn({ children, cls }) {
  return <div className={`h-[27px] flex items-center justify-center bg-[#e1e1e1] ${cls}`}><span>{children}</span></div>;
}

function CheckRow({ checked, className = "", children }) {
  return (
    <div className={`flex items-center gap-[4px] h-[13px] ${className}`}>
      <Check checked={checked} />
      <span>{children}</span>
    </div>
  );
}

function Dialog() {
  return (
    <div className={`absolute left-[501px] top-[427px] w-[400px] h-[404px] z-20 bg-[#f0f0f0] border border-[#6e6e6e] shadow-[0_2px_14px_rgba(0,0,0,0.35)] text-[12px] text-[#333] ${UI_FONT}`}>
      <div className="h-[30px] bg-white flex items-center pl-[8px]">
        <span>数据验证</span>
        <span className="ml-[272px] text-[13px]">?</span>
        <svg className="ml-[35px]" width="11" height="11" viewBox="0 0 11 11" stroke="#222"><path d="M.5.5l10 10M10.500.5l-10 10" /></svg>
      </div>
      <div className="pl-[6px] pr-[8px]">
        <div className="flex pt-[10px]">
          <div className="w-[55px] h-[27px] bg-white border border-b-0 border-[#d9d9d9] p-[2px] pr-[3px] relative z-10 -mb-px">
            <div className="h-full flex items-center justify-center border border-dotted border-[#222]">设置</div>
          </div>
          <DialogTab w="w-[64px]">输入信息</DialogTab>
          <DialogTab w="w-[66px]">出错警告</DialogTab>
          <DialogTab w="w-[76px]">输入法模式</DialogTab>
        </div>
        <div className="h-[285px] w-[384px] bg-white border border-[#d9d9d9] pl-[8px]">
          <div className="flex items-center mt-[12px] h-[16px]">
            <span>验证条件</span>
            <span className="ml-[5px] w-[315px] h-px bg-[#dcdcdc]" />
          </div>
          <div className="flex pl-[9px] mt-[11px]">
            <div className="flex flex-col w-[125px]">
              <span className="h-[16px] leading-[16px]">允许(<u>A</u>):</span>
              <div className="mt-[4px]"><Drop value="序列" h="h-[28px]" /></div>
              <span className="h-[16px] leading-[16px] mt-[4px] text-[#8d8d8d]">数据(<u>D</u>):</span>
              <div className="mt-[5px]"><Drop value="等于" disabled h="h-[27px]" /></div>
            </div>
            <div className="flex flex-col ml-[9px] pt-[23px] gap-[12px]">
              <CheckRow checked>忽略空值(<u>B</u>)</CheckRow>
              <CheckRow checked>提供下拉箭头(<u>I</u>)</CheckRow>
            </div>
          </div>
          <div className="ml-[9px] mt-[5px] h-[16px] leading-[16px]">来源(<u>S</u>):</div>
          <div className="ml-[9px] mt-[4px] w-[257px] h-[26px] bg-white border border-[#a8a8a8] flex">
            <span className="flex-1 flex items-center pl-[4px] tracking-[0.5px]">=$T$3#</span>
            <span className="w-[21px] bg-[#e6e6e6] border-l border-[#c8c8c8] flex items-start justify-center pt-[3px]">
              <svg width="10" height="13" viewBox="0 0 10 13" fill="#111"><path d="M5 1L.5 6H3v4h4V6h2.500zM1 11.500h8v1H1z" /></svg>
            </span>
          </div>
          <CheckRow className="mt-[65px]">对有同样设置的所有其他单元格应用这些更改(<u>P</u>)</CheckRow>
        </div>
        <div className="flex mt-[13px]">
          <DialogBtn cls="w-[81px] border border-[#adadad]">全部清除(<u>C</u>)</DialogBtn>
          <DialogBtn cls="w-[74px] ml-[146px] border-2 border-[#0078d7]">确定</DialogBtn>
          <DialogBtn cls="w-[74px] ml-[10px] border border-[#adadad]">取消</DialogBtn>
        </div>
      </div>
    </div>
  );
}

function Annotations() {
  return (
    <svg className="absolute left-0 top-0 z-30 pointer-events-none" width="1615" height="993" viewBox="0 0 1615 993">
      <g fill="#ea2a20">
        <polygon points="472,49 1063.3,118.7 1062.9,114.4 1084,124 1061.1,128.4 1062.7,124.3" />
        <polygon points="1065,157 623.400,547.500 620.100,543.700 615,559 630.700,555.700 627.400,551.900" />
        <polygon points="538,280 446.100,88.500 442.300,90.200 441,71 454.900,84.400 451.100,86.100" />
        <polygon points="577,676 589,683 584.500,685 587.500,698 582,687 577,690" />
      </g>
      <ellipse cx="361.500" cy="281" rx="172" ry="15" fill="none" stroke="#e0271f" strokeWidth="3" />
    </svg>
  );
}

function SideStrip() {
  return (
    <div className="w-[33px] shrink-0 flex flex-col bg-white">
      <div className="h-[60px] bg-[#e3e6ea] flex items-center pb-[2px]">
        <svg width="8" height="16" viewBox="0 0 8 16" fill="none" stroke="#777" strokeWidth="1.300"><path d="M7 1L1 8l6 7" /></svg>
      </div>
      <div className="h-[120px] bg-[#e3e6ea]">
        <div className="h-full bg-white rounded-tr-[8px] flex items-center">
          <div className="flex flex-col gap-[6px] -mt-[44px] -ml-[2px]">
            <span className="w-[4px] h-[4px] rounded-full bg-[#333]" />
            <span className="w-[4px] h-[4px] rounded-full bg-[#333]" />
            <span className="w-[4px] h-[4px] rounded-full bg-[#333]" />
          </div>
        </div>
      </div>
      <div className="h-[2px] bg-[#d8d8d8]" />
      <div className="flex-1 flex bg-white">
        <div className="ml-[8px] flex-1 bg-[#f0f0f0] flex flex-col items-center">
          <span className="mt-[10px] w-0 h-0 border-x-[5px] border-x-transparent border-b-[6px] border-b-[#333]" />
          <div className="mt-[433px] w-[21px] h-[33px] bg-[#bfbfbf]" />
        </div>
      </div>
    </div>
  );
}

export default function App() {
  return (
    <div className="relative w-[1615px] h-[993px] overflow-hidden flex bg-white">
      <SideStrip />
      <div className="flex-1 min-w-0 flex flex-col">
        <TitleBar />
        <div className={`h-[28px] bg-[#f3f3f3] flex items-start pt-[6px] pl-[14px] gap-[27px] text-[13px] text-[#3b3b3b] ${UI_FONT}`}>
          {TABS.map((t) => (
            <div key={t} className={`relative h-[22px] leading-[18px] whitespace-nowrap ${t === "数据" ? "font-semibold text-[#2b2b2b]" : ""} ${t === "Power Pivot" ? "ml-[5px]" : ""}`}>
              {t}
              {t === "数据" && <span className="absolute left-0 right-0 bottom-0 h-[3px] bg-[#217346]" />}
            </div>
          ))}
        </div>
        <Ribbon />
        <FormulaBar />
        <Sheet />
        <div className="h-[3px] bg-[#e6e6e6] border-t border-[#a5a5a5] relative">
          <span className="absolute left-[100px] -top-px w-[54px] h-[3px] bg-white" />
        </div>
      </div>
      <Dialog />
      <Annotations />
      <div className="absolute left-[1388px] top-[961px] z-30 whitespace-nowrap text-[19.5px] text-[#8a8a8a]/70 font-['Liberation_Sans','Noto_Sans_CJK_SC',sans-serif] [text-shadow:2px_0_0_rgba(140,140,140,0.35)]">
        CSDN @葡萄城技术团队
      </div>
    </div>
  );
}
